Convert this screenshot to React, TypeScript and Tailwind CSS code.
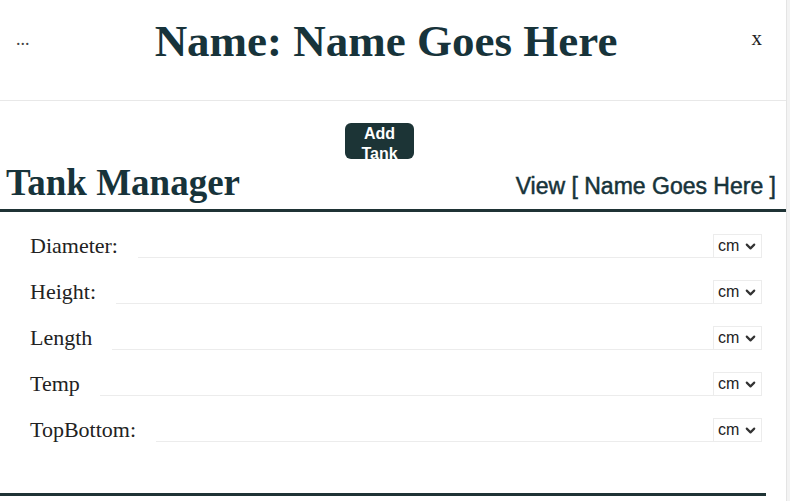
import { ChevronDown } from 'lucide-react';

const FIELDS = ['Diameter:', 'Height:', 'Length', 'Temp', 'TopBottom:'];

// Unit picker shown at the end of each row
function UnitSelect() {
  return (
    <div className="flex h-6 w-[49px] shrink-0 items-center justify-between border border-[#ececec] pl-[4px] pr-[3px] font-['Liberation_Sans',Arial,sans-serif] text-[16px] text-[#222]">
      <span>cm</span>
      <ChevronDown size={15} strokeWidth={3.4} className="text-[#333]" />
    </div>
  );
}

export default function App() {
  return (
    <div className="flex h-[501px] w-[790px] overflow-hidden bg-white">
      <main className="w-[786px] shrink-0 text-[#17333a]">
        {/* Header */}
        <header className="flex h-[101px] items-center border-b border-[#e8e8e8] pb-[18px] font-['Liberation_Serif','Times_New_Roman',serif]">
          <span className="w-[141px] pb-1 pl-4 text-[18px] text-[#444]">...</span>
          <h1 className="flex-1 text-center text-[45px] font-bold leading-none">Name: Name Goes Here</h1>
          <span className="w-[155px] pb-1 pr-6 text-right text-[21px] text-[#222]">x</span>
        </header>

        {/* Add button */}
        <div className="flex h-[59px] pl-[345px] pt-[22px]">
          <button className="h-9 w-[69px] overflow-hidden rounded-[6px] bg-[#1c3436] px-1 pt-[1px] text-center font-['Liberation_Sans',Arial,sans-serif] text-[16px] font-bold leading-[20px] text-white">
            Add Tank
          </button>
        </div>

        {/* Section heading */}
        <div className="flex h-[52px] items-center justify-between border-b-[3px] border-[#1f3335] pb-1 pl-[6px] pr-[10px]">
          <h2 className="font-['Liberation_Serif','Times_New_Roman',serif] text-[37px] font-bold leading-none">Tank Manager</h2>
          <span className="pt-2 font-['Liberation_Sans',Arial,sans-serif] text-[23px] leading-none [-webkit-text-stroke:0.5px_#17333a]">View [ Name Goes Here ]</span>
        </div>

        {/* Fields */}
        <div className="flex flex-col gap-[22px] pl-[30px] pr-6 pt-[22px]">
          {FIELDS.map(f => (
            <div key={f} className="flex h-6 items-end">
              <label className="self-center font-['Liberation_Serif','Times_New_Roman',serif] text-[22px] leading-none text-[#222]">{f}</label>
              <div className="ml-5 h-full flex-1 border-b border-[#ececec]" />
              <UnitSelect />
            </div>
          ))}
        </div>

        <div className="mt-[51px] h-[3px] w-[766px] bg-[#1f3335]" />
      </main>

      {/* Scrollbar strip */}
      <div className="flex-1 border-l border-[#e4e4e4] bg-[#f3f3f3]" />
    </div>
  );
}
